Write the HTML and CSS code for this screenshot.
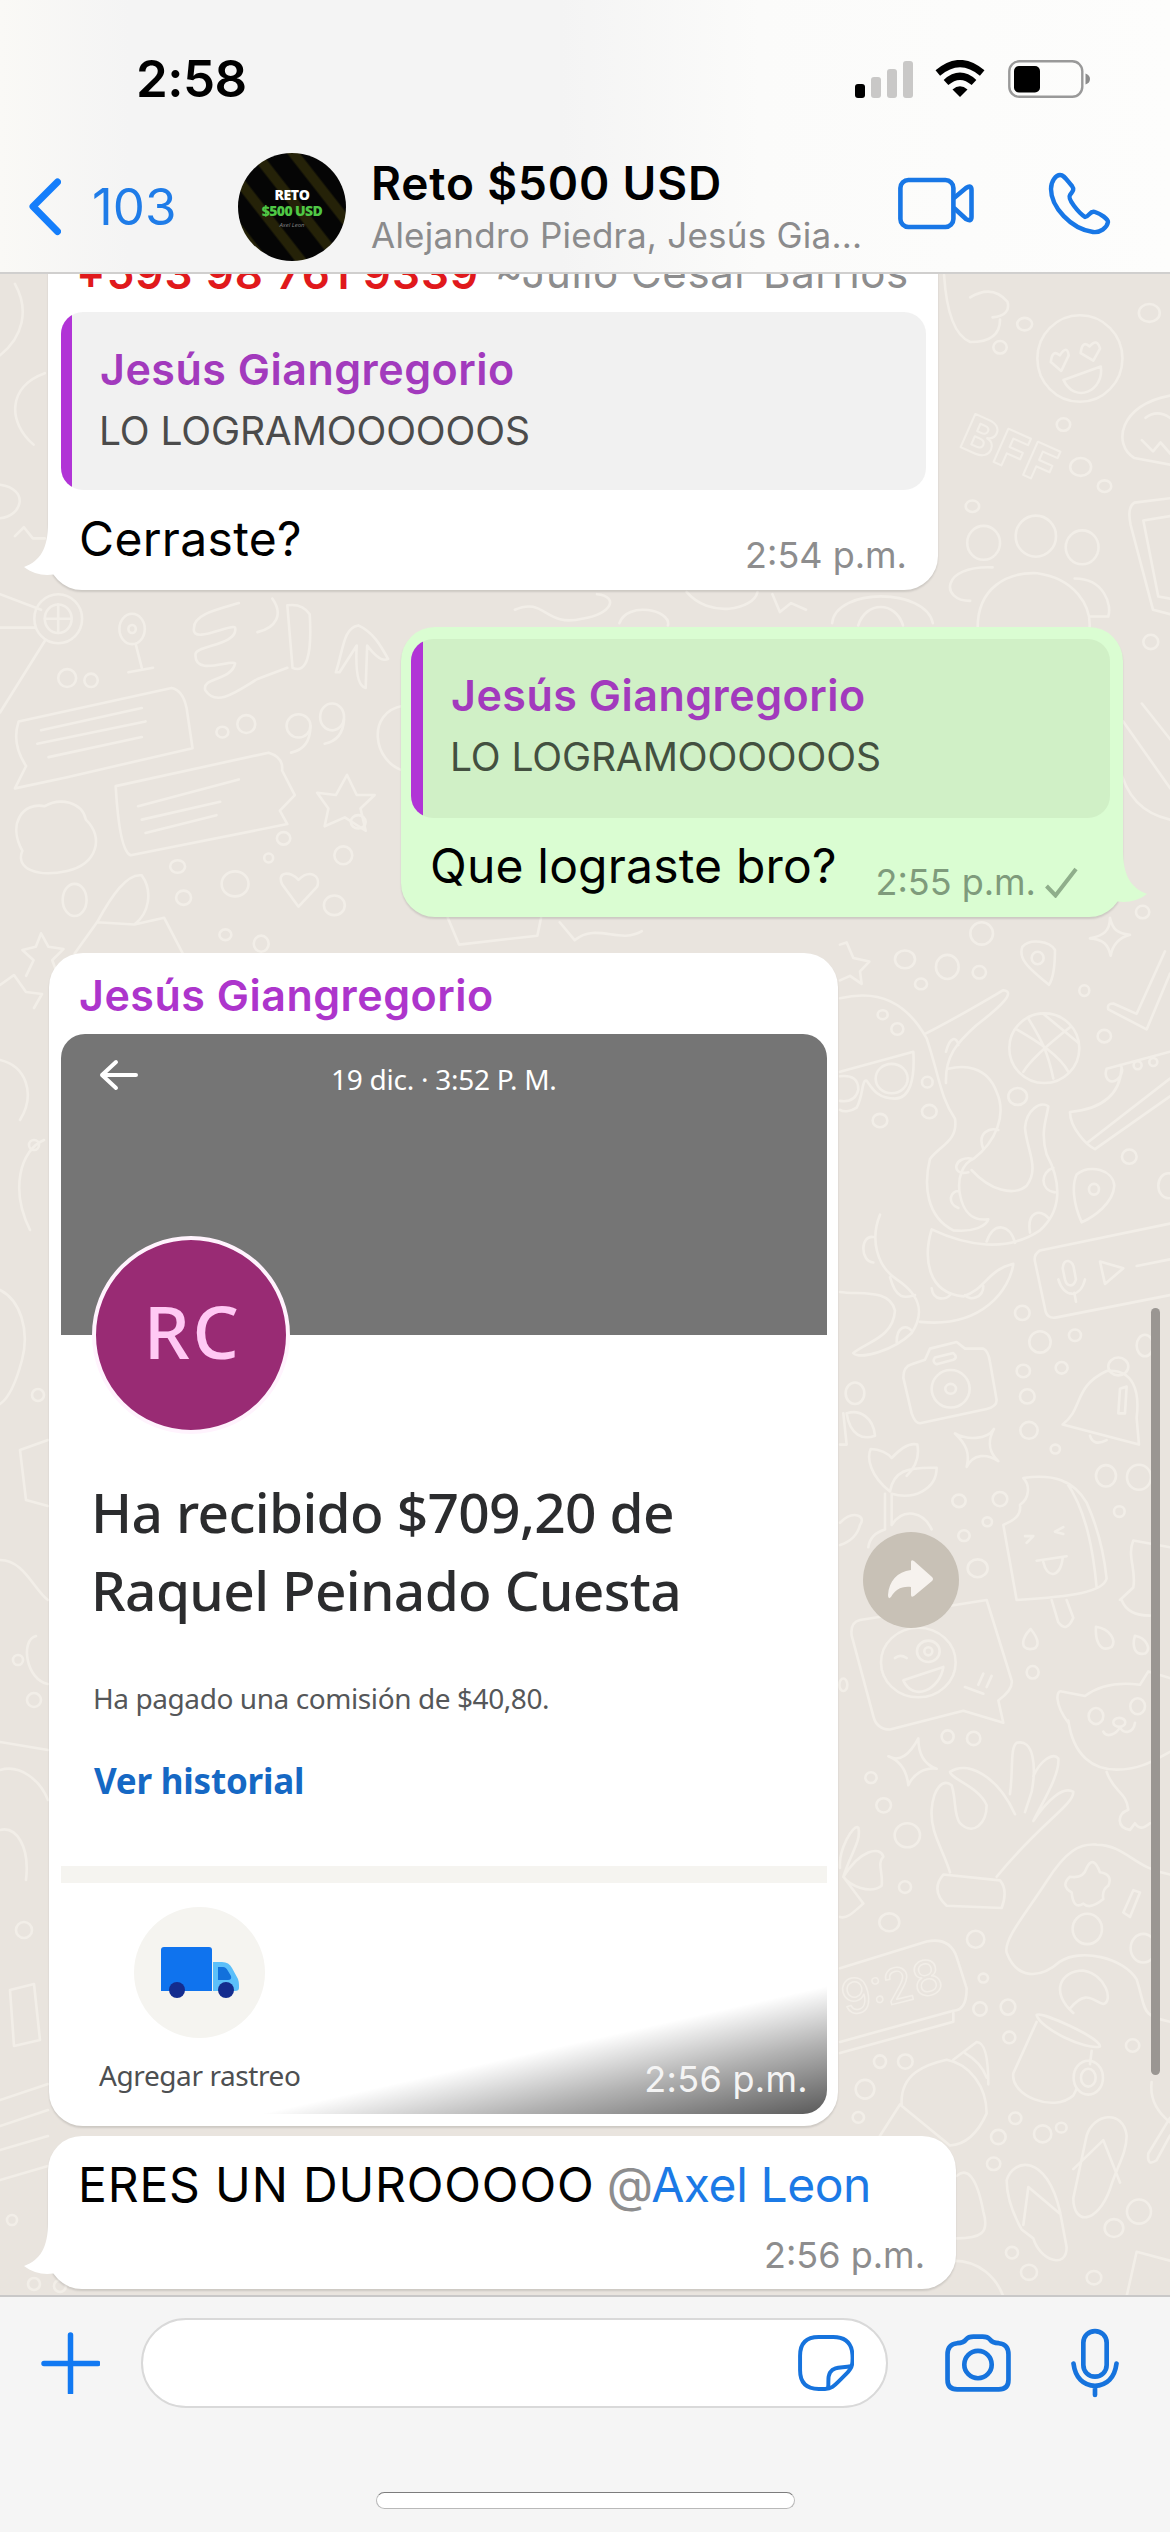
FILE: index.html
```html
<!DOCTYPE html>
<html lang="es">
<head>
<meta charset="utf-8">
<title>Reto $500 USD</title>
<link rel="stylesheet" href="styles.css">
</head>
<body>
<div class="phone">
  <header class="header">
    <div class="status">
      <span class="clock">2:58</span>
      <div class="indicators">
        <svg width="58" height="38" viewBox="0 0 58 38"><rect x="0" y="24" width="10" height="14" rx="3"/><g fill="#c9c8c7"><rect x="16" y="17" width="10" height="21" rx="3"/><rect x="32" y="9" width="10" height="29" rx="3"/><rect x="48" y="1" width="10" height="37" rx="3"/></g></svg>
        <svg width="50" height="38" viewBox="0 0 50 38"><path d="M25 37 17.500 29.500Q25 23 32.500 29.500Z"/><path d="M11 22.500Q25 10 39 22.500M2.800 13Q25-6 47.200 13" fill="none" stroke="#000" stroke-width="7"/></svg>
        <svg width="82" height="38" viewBox="0 0 82 38"><rect x="1.300" y="1.300" width="73" height="35.500" rx="10" fill="none" stroke="#999" stroke-width="2.400"/><rect x="6" y="6" width="26" height="26.500" rx="5"/><path d="M77.500 13.500Q82 15 82 19T77.500 24.500Z" fill="#8c8c8c"/></svg>
      </div>
    </div>
    <nav class="nav">
      <svg class="back" width="32" height="58" viewBox="0 0 32 58"><path d="M28.500 4 4 28.500 28.500 53.500" fill="none" stroke="#157efb" stroke-width="7" stroke-linecap="round" stroke-linejoin="round"/></svg>
      <span class="unread">103</span>
      <div class="avatar"><b class="avatar-top">RETO</b><b class="avatar-mid">$500 USD</b><i class="avatar-sign">Axel Leon</i></div>
      <div class="title-block"><h1 class="title">Reto $500 USD</h1><p class="subtitle">Alejandro Piedra, Jesús Gia...</p></div>
      <svg width="78" height="54" viewBox="0 0 78 54"><g fill="none" stroke="#1877e6" stroke-width="4.600" stroke-linejoin="round"><rect x="2.400" y="4" width="53" height="47" rx="8"/><path d="M56 22 68 12Q73.500 8.500 73.500 14V41Q73.500 46 68 43L56 32"/></g></svg>
      <svg width="64" height="66" viewBox="0 0 64 66"><path d="M12 4C16 4 18 8 24 15C27 19 24 21 22 24C19 28 31 42 37 46C41 46 42 39 47 41C53 43 60 48 60 51C59 57 52 62 45 61C23 58 3 36 3 18C3 10 8 4 12 4Z" fill="none" stroke="#1877e6" stroke-width="4.400" stroke-linejoin="round"/></svg>
    </nav>
  </header>

  <main class="chat">
    <svg class="wallpaper" viewBox="0 274 1170 2021" width="1170" height="2021">
      <g class="doodle" transform="translate(0 275) scale(.7463 .4464)">
        <ellipse cx="1447" cy="187" rx="57" ry="97"/><path d="M1425 235 1475 205C1480 260 1440 290 1425 235ZM1408 195Q1410 165 1420 180 1430 155 1432 180L1422 215ZM1448 175Q1450 145 1460 160 1470 140 1474 165L1465 192Z"/>
        <path d="M1568 270C1500 290 1490 380 1520 410L1568 425M1535 320Q1550 300 1568 320M1530 370 1545 395 1555 375 1568 400"/>
        <ellipse cx="1388" cy="585" rx="27" ry="46"/><ellipse cx="1318" cy="600" rx="22" ry="38"/><ellipse cx="1450" cy="610" rx="22" ry="38"/><path d="M1310 790C1310 700 1350 665 1390 668C1440 680 1462 740 1460 790M1300 730C1260 730 1260 650 1330 655M1440 680C1480 680 1490 740 1485 765L1460 765M1568 500 1520 510Q1510 520 1515 560L1545 750 1568 760M1568 540 1532 550 1552 720 1568 725M1265 0Q1270 130 1300 150 1340 150 1340 100M1300 50Q1330 20 1350 60 1355 90 1330 95M1115 780C1120 700 1240 700 1250 780M1150 785C1160 730 1200 730 1210 785M920 710C950 770 1010 750 1015 710M1035 715 1045 755 1060 735 1080 750M690 750C730 720 730 790 780 770 820 760 830 720 800 715M830 780C840 730 900 750 895 785"/>
        <ellipse cx="1540" cy="85" rx="14" ry="20"/><ellipse cx="1373" cy="110" rx="10" ry="14"/><ellipse cx="1340" cy="162" rx="9" ry="14"/><ellipse cx="1425" cy="335" rx="9" ry="14"/><ellipse cx="1448" cy="430" rx="14" ry="20"/><ellipse cx="1480" cy="473" rx="9" ry="13"/><ellipse cx="1303" cy="518" rx="9" ry="13"/><ellipse cx="1542" cy="822" rx="10" ry="16"/>
        <ellipse cx="78" cy="770" rx="32" ry="55"/><ellipse cx="78" cy="770" rx="18" ry="32"/><path d="M0 715 55 750M0 790H48M60 820 0 980M78 738V802M60 770H96"/>
        <ellipse cx="177" cy="793" rx="17" ry="34"/><ellipse cx="177" cy="793" rx="5" ry="9"/><path d="M182 828 190 880M172 890 205 880"/>
        <path d="M365 725C380 760 370 790 345 800M320 735C290 750 260 760 260 790C255 830 310 780 315 790C320 830 260 830 262 850C260 900 310 860 315 870C310 910 270 900 275 930C290 970 320 930 345 905L385 880M385 740 392 880Q420 900 415 760Q405 735 385 740M450 890C460 840 460 790 480 785C500 800 510 830 520 860Q510 870 492 830L490 925Q475 920 478 830L455 890Z"/>
        <path d="M25 1000 230 925Q245 930 250 970L258 1060 90 1125 20 1150 35 1100Q15 1050 25 1000ZM55 1020 190 970M50 1050 195 1000M65 1080 190 1035M155 1145 360 1070Q380 1080 378 1110L395 1165 375 1200 385 1230 175 1300Q160 1290 155 1145ZM185 1190 320 1130M190 1220 295 1180M195 1250 290 1210"/>
        <ellipse cx="400" cy="1010" rx="16" ry="26"/><path d="M416 1010C416 1050 405 1065 390 1070"/><ellipse cx="445" cy="990" rx="16" ry="30"/><path d="M461 995C460 1030 450 1045 435 1050M465 1120 478 1165 502 1165 483 1195 490 1245 462 1215 435 1235 440 1195 425 1160 450 1165ZM30 1290C10 1230 30 1180 60 1190C80 1170 110 1180 115 1220C140 1260 130 1320 90 1335C50 1350 20 1330 30 1290ZM378 1365C370 1335 390 1335 400 1355C415 1330 430 1345 425 1370L400 1415ZM55 1475 65 1505 85 1510 70 1535 80 1580M55 1475 48 1505 30 1512 45 1535 35 1570M130 1450C150 1390 170 1340 190 1345C205 1380 200 1430 180 1455ZM180 1455 220 1440 245 1520M130 1450 100 1520M600 1440 615 1500 720 1480 725 1440M750 1450 770 1490C800 1450 830 1500 860 1470M540 965C490 980 500 1090 540 1110"/>
        <ellipse cx="90" cy="903" rx="12" ry="20"/><ellipse cx="122" cy="908" rx="9" ry="15"/><ellipse cx="298" cy="1024" rx="8" ry="12"/><ellipse cx="330" cy="1006" rx="12" ry="20"/><ellipse cx="380" cy="1262" rx="9" ry="14"/><ellipse cx="315" cy="1364" rx="18" ry="28"/><ellipse cx="238" cy="1325" rx="10" ry="14"/><ellipse cx="460" cy="1300" rx="12" ry="20"/><ellipse cx="480" cy="1225" rx="10" ry="15"/><ellipse cx="360" cy="1306" rx="6" ry="10"/><ellipse cx="100" cy="1400" rx="16" ry="36"/><ellipse cx="246" cy="1395" rx="10" ry="16"/><ellipse cx="448" cy="1412" rx="14" ry="22"/><ellipse cx="302" cy="1478" rx="8" ry="12"/><ellipse cx="350" cy="1498" rx="10" ry="18"/>
        <path d="M20 20C40 80 30 140 0 180M60 220C10 250 10 330 45 380M0 470C40 480 30 540 0 545M20 585 32 565 44 590 60 590M1505 1000 1568 1150M1500 1100C1510 1180 1540 1210 1568 1220M1530 960 1568 1040"/>
      </g>
      <g class="doodle" transform="translate(840 900) scale(.3333 .4464)">
        <path d="M0 100 20 95 40 130 88 138 60 160 65 188 30 170 0 180M627 190C560 150 535 130 547 105C570 85 630 92 645 112C645 140 640 175 627 190ZM810 40C810 70 790 80 750 86C790 88 805 100 812 125C818 100 835 85 870 78C830 75 818 65 810 40ZM975 115 890 255 820 232Q800 232 805 245L920 290 990 165"/>
        <ellipse cx="593" cy="130" rx="18" ry="14"/><ellipse cx="613" cy="332" rx="105" ry="78"/><path d="M530 290C600 320 660 350 685 385M565 265C600 310 620 330 640 400M690 285C630 320 570 360 550 385M610 255 715 320"/>
        <path d="M990 340 800 378C790 400 810 410 825 405C850 395 850 375 840 370M845 375C840 450 760 470 690 475C690 510 740 550 765 558L990 440M740 545 990 400M0 385 220 340C225 400 210 445 165 445C110 445 95 420 80 405C65 400 70 440 50 465C30 475 10 475 0 470M0 395Q55 390 55 425 45 455 0 450"/><ellipse cx="155" cy="400" rx="48" ry="33"/><ellipse cx="893" cy="370" rx="12" ry="9"/><ellipse cx="940" cy="363" rx="12" ry="9"/>
        <path d="M0 220C120 200 200 230 260 310C300 400 300 440 345 490C355 540 300 550 270 580C250 640 260 710 340 740C400 745 440 730 445 715C400 720 370 700 360 660C350 620 370 590 400 580C470 540 500 480 470 430C440 370 370 370 325 378M255 300C360 260 460 215 490 202C530 205 480 240 410 280C350 320 315 350 318 410M395 605C450 650 520 665 560 640C600 600 560 560 555 510C560 470 600 450 625 462C620 490 600 520 620 570C670 640 660 700 600 740C500 790 380 775 275 738C250 800 260 880 370 888C440 870 440 830 520 815C510 870 430 960 240 945M120 705C90 760 110 820 170 850C250 890 250 930 215 970C160 1010 60 1030 40 1015C80 990 160 980 165 920C150 870 60 885 0 878M385 610C330 620 340 570 400 580M355 690C320 680 330 650 358 652M440 765C460 720 510 725 525 768M570 745C560 700 600 690 625 712M645 655C600 650 600 610 640 600M430 558C410 520 450 510 475 515M318 340C330 305 350 305 355 325M100 812C60 810 60 750 100 755M150 845C170 900 200 890 225 885M170 990C170 955 200 950 215 965M275 870C280 900 320 895 330 885M375 885C390 900 430 890 430 865"/>
        <path d="M725 722C700 680 695 640 710 615C750 590 820 605 823 640C820 680 760 710 725 722ZM990 725 600 785Q580 795 585 810L615 915Q620 940 650 935L990 885M668 825C670 800 700 805 703 830L708 850C700 870 680 865 675 850ZM655 850C670 890 720 895 735 850M703 880 708 900M780 810 850 825 795 860ZM890 820 990 805M215 1040 255 1030 270 1005 350 990 375 1005 430 1005Q445 1010 450 1035L470 1120Q470 1135 440 1140L240 1172Q225 1172 215 1150L190 1070Q190 1045 215 1040ZM285 1025 340 1015Q355 1025 340 1030L290 1040Q275 1035 285 1025Z"/>
        <ellipse cx="762" cy="648" rx="15" ry="12"/><ellipse cx="332" cy="1095" rx="57" ry="42"/><ellipse cx="332" cy="1095" rx="16" ry="11"/><ellipse cx="835" cy="1045" rx="30" ry="20"/>
        <path d="M668 1175C730 1140 700 1090 800 1055C880 1050 900 1100 890 1160L897 1220ZM750 1200Q760 1225 800 1210M840 1095 860 1090 855 1150 835 1150ZM345 1195C380 1210 440 1210 462 1185C440 1215 450 1240 475 1257C440 1240 400 1240 380 1270C390 1240 380 1220 345 1195ZM150 1325C90 1290 80 1250 92 1230C120 1230 145 1240 155 1250C180 1230 210 1215 232 1220C240 1250 220 1275 200 1290M150 1325C160 1280 200 1270 290 1272C290 1320 220 1345 155 1330L155 1400M135 1330 135 1410M155 1400C190 1360 250 1370 275 1410M135 1410Q90 1420 85 1450M0 1395C40 1365 80 1380 60 1400 50 1430 20 1440 0 1445M20 1150C60 1140 100 1160 105 1200 70 1210 30 1200 20 1150M0 1220 20 1220 10 1150"/>
        <path d="M550 1295C640 1285 700 1300 740 1350C770 1400 790 1450 800 1520C790 1550 700 1560 530 1568L490 1400C520 1390 545 1380 540 1355C570 1340 570 1310 550 1295ZM680 1305C740 1370 760 1460 770 1540M590 1480 680 1470M610 1483C620 1520 660 1520 668 1475M555 1425 580 1425 560 1440M670 1405 645 1415 670 1420M990 1450 880 1435C860 1470 890 1500 880 1540L840 1568"/>
        <ellipse cx="195" cy="133" rx="30" ry="20"/><ellipse cx="322" cy="150" rx="34" ry="27"/><ellipse cx="425" cy="75" rx="34" ry="25"/><ellipse cx="418" cy="162" rx="20" ry="14"/><ellipse cx="243" cy="188" rx="18" ry="12"/><ellipse cx="733" cy="203" rx="15" ry="12"/><ellipse cx="793" cy="305" rx="20" ry="14"/><ellipse cx="533" cy="440" rx="28" ry="19"/><ellipse cx="128" cy="257" rx="15" ry="10"/><ellipse cx="172" cy="289" rx="18" ry="13"/><ellipse cx="262" cy="408" rx="16" ry="12"/><ellipse cx="268" cy="474" rx="22" ry="15"/><ellipse cx="120" cy="494" rx="22" ry="15"/><ellipse cx="868" cy="575" rx="22" ry="16"/><ellipse cx="547" cy="925" rx="22" ry="16"/><ellipse cx="600" cy="990" rx="32" ry="24"/><ellipse cx="705" cy="975" rx="18" ry="13"/><ellipse cx="550" cy="1055" rx="20" ry="14"/><ellipse cx="665" cy="1048" rx="18" ry="13"/><ellipse cx="562" cy="1112" rx="22" ry="16"/><ellipse cx="567" cy="1188" rx="26" ry="19"/><ellipse cx="798" cy="1290" rx="30" ry="24"/><ellipse cx="897" cy="1293" rx="36" ry="28"/><ellipse cx="357" cy="1346" rx="20" ry="14"/><ellipse cx="480" cy="1342" rx="22" ry="16"/><ellipse cx="442" cy="1393" rx="14" ry="10"/><ellipse cx="372" cy="1424" rx="17" ry="12"/><ellipse cx="413" cy="1497" rx="30" ry="20"/><ellipse cx="838" cy="1370" rx="16" ry="12"/><ellipse cx="646" cy="1230" rx="14" ry="10"/><ellipse cx="908" cy="27" rx="20" ry="14"/><ellipse cx="45" cy="1105" rx="28" ry="24"/><ellipse cx="985" cy="640" rx="30" ry="28"/><ellipse cx="915" cy="998" rx="25" ry="24"/>
      </g>
      <g class="doodle" transform="translate(840 1600) scale(.3333 .4464)">
        <path d="M35 80Q30 50 60 45L440 0 515 180Q520 200 475 225L490 275 370 248 150 290Q110 290 100 260ZM190 180 310 150C300 200 220 230 190 180ZM165 130Q180 120 200 130M375 195 430 210M415 190 430 165M440 195 455 170M635 0 655 50Q680 75 700 40L680 0M572 65C600 90 600 110 570 110 540 110 545 85 572 65ZM768 60C810 65 830 90 815 105 780 120 765 90 768 60ZM885 80C920 85 935 110 915 120 885 125 875 105 885 80ZM845 0C860 30 900 35 930 35"/>
        <ellipse cx="235" cy="140" rx="112" ry="78"/><ellipse cx="265" cy="115" rx="34" ry="24"/><ellipse cx="265" cy="115" rx="12" ry="9"/>
        <path d="M685 275C640 230 650 200 665 205L735 215C790 185 850 185 900 190L925 160 990 175M685 270C700 350 760 380 830 380C900 380 940 360 990 340M800 385C820 430 860 430 865 470C830 480 830 510 870 515L885 500Q900 520 930 500M790 295C800 310 830 300 840 285C850 300 880 300 885 275"/><ellipse cx="768" cy="260" rx="22" ry="18"/><ellipse cx="893" cy="238" rx="22" ry="18"/><ellipse cx="838" cy="274" rx="18" ry="10"/>
        <path d="M330 610C310 560 270 520 275 470C280 420 310 400 335 415C350 450 340 480 360 500C400 530 440 500 440 460C420 420 330 400 330 385C380 360 470 390 525 480M510 435C520 380 510 330 530 320C580 310 590 370 575 430L555 475M580 395C600 360 640 340 655 355C660 390 610 450 580 495C620 450 670 415 700 430C700 460 600 500 470 620M310 615 480 628Q505 650 485 690L320 685Q270 650 310 615ZM145 350C180 365 210 345 235 310 235 350 260 370 290 378 250 375 220 390 205 415 200 380 180 360 145 350Z"/>
        <path d="M500 790C490 760 560 700 620 630C680 560 720 545 770 548C860 550 880 600 990 615M500 790C530 850 600 850 660 810C720 780 850 800 890 850C920 920 900 930 990 945M740 600Q760 570 780 610 820 615 805 640 785 650 790 670 750 695 730 680 700 695 695 655 660 640 690 620 730 625 740 600ZM850 700 880 650 900 655 870 710Z"/>
        <path d="M0 825 260 765Q330 755 350 800L380 870Q380 920 340 920L0 990M340 925V945L0 1015M0 600C-5 560 40 500 55 510 65 540 30 570 10 620 60 560 120 550 130 575 110 590 130 610 125 640 90 660 30 640 10 620 40 650 60 670 70 680 40 700 20 715 0 710"/>
        <path d="M590 945 520 1060C510 1110 640 1150 700 1110L710 1095M755 1010 750 1040M590 930C600 920 780 980 780 1000C740 1010 600 960 590 930ZM700 925C630 880 660 830 730 830C800 840 820 900 790 905C760 900 740 870 690 915"/><ellipse cx="745" cy="1070" rx="44" ry="38"/><ellipse cx="745" cy="1070" rx="22" ry="20"/>
        <path d="M185 1130C180 1060 260 1040 320 1030C390 1040 440 1090 440 1150C410 1200 370 1220 330 1222L180 1130 120 1200M340 1030 410 990Q445 990 445 1085M375 1015C410 1030 430 1050 440 1070M500 1300C520 1250 620 1240 660 1370L680 1450C680 1500 600 1480 580 1430L545 1410Q500 1350 500 1300ZM550 1400 565 1315 660 1375M740 1200C760 1150 850 1140 860 1200C860 1240 830 1270 810 1320C770 1400 700 1400 700 1340ZM700 1275 790 1210 840 1305M350 1290C380 1270 410 1290 430 1370C450 1420 420 1430 350 1430M990 1480 890 1460 860 1560M990 1170C940 1140 930 1110 935 1080M990 1160 925 1240Q920 1270 950 1255L990 1200M340 1480C420 1480 470 1520 490 1560"/>
        <ellipse cx="578" cy="162" rx="18" ry="14"/><ellipse cx="10" cy="190" rx="12" ry="14"/><ellipse cx="323" cy="306" rx="18" ry="14"/><ellipse cx="401" cy="310" rx="20" ry="15"/><ellipse cx="93" cy="398" rx="17" ry="12"/><ellipse cx="131" cy="460" rx="22" ry="16"/><ellipse cx="202" cy="527" rx="38" ry="27"/><ellipse cx="195" cy="643" rx="18" ry="13"/><ellipse cx="148" cy="722" rx="30" ry="20"/><ellipse cx="407" cy="760" rx="26" ry="19"/><ellipse cx="430" cy="847" rx="14" ry="10"/><ellipse cx="420" cy="916" rx="20" ry="15"/><ellipse cx="504" cy="912" rx="22" ry="17"/><ellipse cx="508" cy="980" rx="18" ry="13"/><ellipse cx="878" cy="998" rx="20" ry="14"/><ellipse cx="120" cy="1034" rx="18" ry="14"/><ellipse cx="196" cy="1034" rx="22" ry="16"/><ellipse cx="75" cy="1096" rx="28" ry="21"/><ellipse cx="55" cy="1159" rx="17" ry="12"/><ellipse cx="526" cy="1161" rx="18" ry="13"/><ellipse cx="475" cy="1203" rx="22" ry="16"/><ellipse cx="608" cy="1196" rx="26" ry="19"/><ellipse cx="664" cy="1182" rx="16" ry="11"/><ellipse cx="461" cy="1263" rx="20" ry="14"/><ellipse cx="897" cy="1370" rx="36" ry="27"/><ellipse cx="822" cy="1407" rx="28" ry="20"/><ellipse cx="516" cy="1462" rx="18" ry="13"/><ellipse cx="567" cy="1506" rx="24" ry="17"/><ellipse cx="762" cy="1518" rx="22" ry="15"/><ellipse cx="742" cy="737" rx="44" ry="34"/><ellipse cx="910" cy="780" rx="38" ry="32"/>
      </g>
      <g class="doodle">
        <text class="doodle-bff" transform="translate(958 446) rotate(24)" font-size="50">BFF</text>
        <text class="doodle-clock" transform="translate(846 2016) rotate(-14)" font-size="48">9:28</text>
        <path d="M0 985 14 975 26 992 42 994 34 1008M0 1060C26 1066 36 1094 20 1120M44 1140C20 1150 10 1190 30 1230M0 1290C20 1300 30 1330 22 1360S6 1400 0 1404M48 1440 20 1450 26 1500 48 1506M0 1560C24 1560 34 1590 48 1600M36 1636C20 1640 26 1680 48 1684M0 1742 48 1750M0 1770C20 1764 40 1780 48 1800M0 1830C16 1826 30 1846 26 1880M10 1990 34 1984 40 2040 14 2046ZM0 2100 48 2084M0 2126 48 2110M0 2150 48 2136M0 2180 48 2166"/>
        <circle cx="34" cy="1145" r="5"/><circle cx="34" cy="1700" r="7"/><circle cx="18" cy="1660" r="5"/><circle cx="24" cy="1930" r="8"/><circle cx="34" cy="2284" r="6"/><circle cx="12" cy="2220" r="5"/><circle cx="38" cy="1395" r="6"/><circle cx="60" cy="2286" r="6"/>
      </g>
    </svg>

    <section class="bubble bubble-first">
      <p class="sender-line"><span class="sender-phone">+593 98 761 9339</span><span class="sender-alias">~Julio Cesar Barrios</span></p>
      <blockquote class="quote"><strong class="quote-name">Jesús Giangregorio</strong><span class="quote-text">LO LOGRAMOOOOOOS</span></blockquote>
      <div class="line line-first"><p class="text text-first">Cerraste?</p><time class="time">2:54 p.m.</time></div>
      <svg class="tail tail-left" width="46" height="56" viewBox="0 0 46 56"><path d="M24 0C24 26 16 38 0 44C10 52 24 54 35 50L46 56V0Z" fill="#fff"/></svg>
    </section>

    <section class="bubble bubble-own">
      <blockquote class="quote quote-own"><strong class="quote-name">Jesús Giangregorio</strong><span class="quote-text">LO LOGRAMOOOOOOS</span></blockquote>
      <div class="line line-own"><p class="text text-own">Que lograste bro?</p><div class="meta"><time class="time time-own">2:55 p.m.</time><svg width="33" height="31" viewBox="0 0 33 31"><path d="M1.500 19 10.500 28.500 31 2" fill="none" stroke="#8fae8b" stroke-width="4"/></svg></div></div>
      <svg class="tail tail-right" width="46" height="56" viewBox="0 0 46 56"><path d="M22 0C22 26 30 38 46 44C36 52 22 54 11 50L0 56V0Z" fill="#dafdd2"/></svg>
    </section>

    <div class="photo-row">
      <section class="bubble bubble-photo">
        <p class="photo-sender">Jesús Giangregorio</p>
        <div class="receipt">
          <div class="receipt-hero">
            <svg width="40" height="32" viewBox="0 0 40 32"><path d="M37 16H3M17 3 3 16 17 29" fill="none" stroke="#fff" stroke-width="4" stroke-linecap="round" stroke-linejoin="round"/></svg>
            <span class="receipt-date">19 dic. · 3:52 P. M.</span>
          </div>
          <div class="initials">RC</div>
          <h2 class="receipt-title">Ha recibido $709,20 de<br>Raquel Peinado Cuesta</h2>
          <p class="receipt-fee">Ha pagado una comisión de $40,80.</p>
          <a class="receipt-link">Ver historial</a>
          <div class="receipt-band"></div>
          <div class="truck"><svg width="78" height="56" viewBox="0 0 78 56"><path d="M3 2H48Q51 2 51 5V46H0V5Q0 2 3 2Z" fill="#0f73ee"/><path d="M52 17H61Q68 17 71 23L77 34Q78 37 78 40V43Q78 46 74 46H52Z" fill="#5bbffa"/><path d="M57 22H62Q65 22 67 26L70 31Q71 35 67 35H57Z" fill="#1271dc"/><g fill="#142c8e"><circle cx="16" cy="45" r="8"/><circle cx="65" cy="45" r="8"/></g></svg></div>
          <p class="receipt-track">Agregar rastreo</p>
          <div class="photo-shade"></div>
          <time class="time time-photo">2:56 p.m.</time>
        </div>
      </section>
      <div class="forward"><svg width="48" height="42" viewBox="0 0 48 42"><path d="M24 3Q24 0 27 2L45 18Q47 20 45 22L27 37Q24 39 24 36V28C14 27 8 31 4 38Q1 41 1 36C2 22 10 13 24 11Z" fill="#f6f2ee"/></svg></div>
    </div>

    <section class="bubble bubble-last">
      <p class="text text-last">ERES UN DUROOOOO <span class="mention"><span class="at">@</span>Axel Leon</span></p>
      <time class="time time-last">2:56 p.m.</time>
      <svg class="tail tail-left" width="46" height="56" viewBox="0 0 46 56"><path d="M24 0C24 26 16 38 0 44C10 52 24 54 35 50L46 56V0Z" fill="#fff"/></svg>
    </section>
    <div class="scrollbar"></div>
  </main>

  <footer class="composer">
    <div class="composer-row">
      <svg width="59" height="62" viewBox="0 0 59 62"><path d="M29.500 3V61M3 31.500H57" stroke="#1279f2" stroke-width="5.500" stroke-linecap="round"/></svg>
      <div class="field"><svg width="56" height="56" viewBox="0 0 54 54"><g fill="none" stroke="#1673dd" stroke-width="3.800" stroke-linejoin="round" stroke-linecap="round"><path d="M52 29C53 24 52.500 18 52 15C50 6 44 2 34 2H20C8 2 2 8 2 20V34C2 46 8 52 20 52H26C32 52 35 49 39 45L46 38C50 34 51.500 32 52 29Z"/><path d="M29 51C30 45 28 41 31 36C35 30 42 32 51 30"/></g></svg></div>
      <svg width="66" height="58" viewBox="0 0 65 57"><g fill="none" stroke="#1673dd" stroke-width="4.600"><path d="M2.500 20Q2.500 10 12 9C17 9 19 8 21 5Q23 2.500 28 2.500H37Q42 2.500 44 5C46 8 48 9 53 9Q62.500 10 62.500 20V45Q62.500 54.500 53 54.500H12Q2.500 54.500 2.500 45Z"/><circle cx="32.500" cy="30" r="13.500"/></g></svg>
      <svg width="48" height="70" viewBox="0 0 47 69"><g fill="none" stroke="#1673dd" stroke-width="4.600" stroke-linecap="round"><rect x="12" y="3" width="23" height="45" rx="11.500"/><path d="M2.300 35C4 49 12 57 23.500 57S43 49 44.700 35M23.500 57V66"/></g></svg>
    </div>
    <div class="home-bar"></div>
  </footer>
</div>
</body>
</html>
```
FILE: styles.css
```css
* { box-sizing: border-box; margin: 0; padding: 0; }
body { width: 1170px; font-family: "Inter", "Liberation Sans", sans-serif; background: #f5f5f5; }
svg { display: block; flex: none; }
.phone { width: 1170px; height: 2532px; display: flex; flex-direction: column; overflow: hidden; }

.header { height: 274px; flex: none; border-bottom: 2px solid #d0cfce; background: linear-gradient(90deg, #faf9f6 0, #f4f4f4 130px, #f4f4f4 560px, #fbfbfa 760px, #fdfdfc 100%); }
.status { height: 100px; padding: 57px 80px 0 136px; display: flex; align-items: center; justify-content: space-between; }
.clock { font-size: 51px; font-weight: 600; line-height: 1; letter-spacing: -0.5px; }
.indicators { display: flex; align-items: center; gap: 23px; }
.indicators svg:first-child { margin-right: -1px; }
.nav { height: 172px; padding: 42px 0 0 29px; display: grid; grid-template-columns: 63px 146px 132px 528px 150px 1fr; align-items: center; }
.nav > svg:nth-last-child(2) { margin-top: -8px; }
.nav > svg:last-child { margin-top: -6px; }
.unread { font-size: 51px; line-height: 60px; color: #1f7ce8; }
.avatar { width: 108px; height: 108px; border-radius: 50%; color: #fff; text-align: center; font-family: "Open Sans", sans-serif; display: flex; flex-direction: column; justify-content: center; background: repeating-linear-gradient(52deg, #050505 0 14px, #252208 16px 24px, #050505 26px 30px); }
.avatar-top { font-size: 14px; line-height: 17px; font-weight: 800; padding-top: 4px; letter-spacing: -0.4px; }
.avatar-mid { font-size: 14px; line-height: 15px; font-weight: 800; color: #4fc845; letter-spacing: -0.6px; }
.avatar-sign { font-size: 6px; line-height: 14px; color: #888; }
.title-block { padding: 4px 0 0 1px; }
.title { font-size: 46px; line-height: 52px; font-weight: 600; letter-spacing: 0.84px; white-space: nowrap; }
.subtitle { font-size: 35px; line-height: 52px; color: #8b8b8c; letter-spacing: 0.23px; white-space: nowrap; }

.chat { position: relative; height: 2021px; flex: none; overflow: hidden; background: #e9e4de; display: flex; flex-direction: column; align-items: flex-start; }
.wallpaper { position: absolute; inset: 0; }
.doodle * { fill: none; stroke: #f2eee8; stroke-width: 2.6px; vector-effect: non-scaling-stroke; stroke-linecap: round; stroke-linejoin: round; }
.doodle .doodle-bff { font-family: "Inter", sans-serif; font-weight: 800; stroke-width: 2px; letter-spacing: 3px; }
.doodle .doodle-clock { font-family: "Inter", sans-serif; font-weight: 400; stroke-width: 1.5px; }

.bubble { position: relative; flex: none; background: #fff; border-radius: 34px; box-shadow: 0 2px 2px rgba(0, 0, 0, .12); }
.bubble-first { width: 890px; height: 360px; margin: -44px 0 0 48px; padding: 15px 12px 0 13px; }
.sender-line { height: 56px; line-height: 56px; padding-left: 15px; display: flex; white-space: nowrap; }
.sender-phone { width: 414px; font-size: 44px; font-weight: 600; color: #e0191c; letter-spacing: 1.03px; }
.sender-alias { padding-left: 5px; font-size: 42px; color: #8d8d8e; letter-spacing: 0.58px; }
.quote { height: 178px; margin-top: 11px; padding: 26px 0 0 39px; display: flex; flex-direction: column; border-radius: 22px; background: linear-gradient(90deg, #b134d6 11px, #f1f1f1 11px); }
.quote-name { font-size: 43px; line-height: 62px; font-weight: 600; letter-spacing: 0.5px; color: #a23abd; }
.quote-text { margin-left: -1px; font-size: 39px; line-height: 62px; letter-spacing: -0.12px; color: #4b4b4b; }
.line { display: flex; justify-content: space-between; align-items: flex-end; white-space: nowrap; }
.line-first { height: 100px; padding: 0 19px 13px 18px; }
.text { font-size: 48px; color: #000; }
.text-first { line-height: 97px; margin-bottom: -10px; letter-spacing: 0.32px; }
.time { font-size: 36px; line-height: 44px; color: #8d8d8e; }
.tail { position: absolute; bottom: 11px; }
.tail-left { left: -24px; }
.tail-right { right: -24px; }

.bubble-own { width: 722px; height: 290px; margin: 37px 0 0 401px; padding: 12px 13px 0 10px; background: #dafdd2; }
.quote-own { height: 179px; margin-top: 0; padding-top: 25px; background: linear-gradient(90deg, #b134d6 12px, #d0f0c6 12px); padding-left: 40px; }
.quote-own .quote-text { color: #435040; }
.line-own { height: 99px; padding: 0 32px 13px 19px; }
.text-own { line-height: 95px; margin-bottom: -9px; letter-spacing: 0.19px; }
.meta { display: flex; align-items: center; gap: 9px; }
.time-own { color: #7f9b7c; }

.photo-row { display: flex; align-items: center; gap: 25px; margin: 36px 0 0 49px; flex: none; }
.bubble-photo { width: 789px; height: 1173px; padding: 12px 11px 12px 12px; }
.photo-sender { height: 60px; line-height: 60px; margin: 0 0 9px 18px; font-size: 43px; font-weight: 600; letter-spacing: 0.5px; color: #ad35cc; }
.receipt { position: relative; height: 1080px; overflow: hidden; border-radius: 24px; background: #fff; font-family: "Noto Sans", sans-serif; }
.receipt-hero { height: 301px; padding: 25px 0 0 38px; display: flex; align-items: flex-start; background: #757575; }
.receipt-date { margin: 0 0 0 192px; font-size: 28px; line-height: 40px; letter-spacing: -0.25px; color: #fff; }
.initials { position: relative; width: 198px; height: 198px; margin: -99px 0 0 31px; padding-left: 3px; border: 4px solid #fff3fd; border-radius: 50%; background: #992b74; color: #ffc9f4; font-size: 73px; font-weight: 500; line-height: 182px; letter-spacing: 2.5px; text-align: center; }
.receipt-title { margin: 39px 0 0 30px; font-size: 55px; line-height: 78px; font-weight: 500; letter-spacing: -0.65px; color: #2b2c2e; white-space: nowrap; }
.receipt-fee { margin: 49px 0 0 32px; font-size: 28px; line-height: 40px; letter-spacing: -0.42px; color: #555759; }
.receipt-link { display: block; margin: 38px 0 0 33px; font-size: 35px; line-height: 50px; font-weight: 700; letter-spacing: -0.22px; color: #1568c4; }
.receipt-band { height: 17px; margin-top: 60px; background: #f5f4f0; }
.truck { width: 131px; height: 131px; margin: 24px 0 0 73px; border-radius: 50%; background: #f5f4f0; display: flex; align-items: center; justify-content: center; }
.receipt-track { margin: 17px 0 0 38px; font-size: 28px; line-height: 40px; letter-spacing: -0.41px; color: #4d4f51; }
.photo-shade { position: absolute; right: 0; bottom: 0; width: 567px; height: 128px; background: linear-gradient(to bottom right, rgba(0, 0, 0, 0) 50%, rgba(0, 0, 0, .3) 72%, rgba(0, 0, 0, .65) 100%); }
.time-photo { position: absolute; right: 19px; bottom: 13px; color: #f4f4f4; font-family: "Inter", sans-serif; letter-spacing: 0.3px; }
.forward { width: 96px; height: 96px; margin-top: 81px; border-radius: 50%; background: #c8c1b6; display: flex; align-items: center; justify-content: center; position: relative; }

.bubble-last { width: 908px; height: 153px; margin: 10px 0 0 48px; padding: 9px 31px 0 30px; display: flex; flex-direction: column; }
.text-last { line-height: 80px; letter-spacing: 0.84px; white-space: nowrap; }
.mention { color: #1b7ae6; letter-spacing: -0.41px; margin-left: -2px; }
.at { color: #8d8d8e; }
.time-last { align-self: flex-end; margin-top: 8px; }
.scrollbar { position: absolute; left: 1151px; top: 1034px; width: 9px; height: 767px; border-radius: 5px; background: #9a9692; }

.composer { flex: 1; border-top: 2px solid #c9c8c8; background: #f5f5f5; display: flex; flex-direction: column; align-items: center; }
.composer-row { width: 100%; height: 132px; padding-left: 41px; display: grid; grid-template-columns: 100px 804px 126px 1fr; align-items: center; }
.field { width: 747px; height: 90px; padding-right: 32px; border: 2px solid #d9d9d9; border-radius: 45px; background: #fff; display: flex; align-items: center; justify-content: flex-end; }
.home-bar { width: 419px; height: 17px; margin-top: 63px; border: 1px solid #b9b9b9; border-top-color: #7d7d7d; border-radius: 9px; background: #fff; }
```
